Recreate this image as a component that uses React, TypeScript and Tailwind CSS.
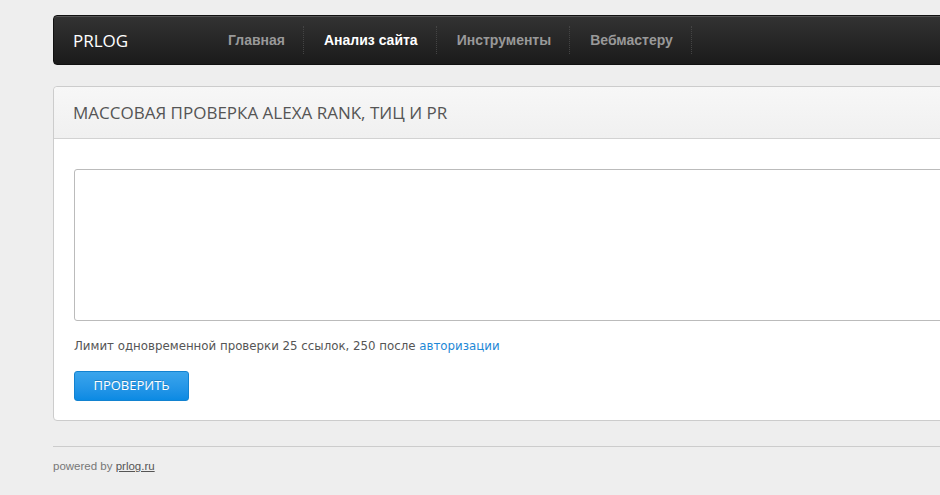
const navItems = [
  { label: "Главная", active: false },
  { label: "Анализ сайта", active: true },
  { label: "Инструменты", active: false },
  { label: "Вебмастеру", active: false },
];

function NavBar() {
  return (
    <div className="flex h-[50px] items-center rounded-[4px] border border-[#111] bg-gradient-to-b from-[#333333] to-[#1b1b1b] pl-[19px] shadow-[inset_0_1px_0_#555]">
      <div className="w-[135px] font-['Open_Sans',sans-serif] text-[17px] leading-none text-white">
        PRLOG
      </div>
      <ul className="flex items-center">
        {navItems.map((item) => (
          <li
            key={item.label}
            className="flex h-[28px] items-center border-r border-dotted border-[#444] pl-[20px] pr-[18px] font-['Liberation_Sans',sans-serif] text-[14px] font-bold"
          >
            <span className={item.active ? "text-white" : "text-[#999999]"}>
              {item.label}
            </span>
          </li>
        ))}
      </ul>
    </div>
  );
}

function CheckPanel() {
  return (
    <div className="mt-[21px] rounded-[4px] border border-[#cccccc] bg-white">
      <div className="flex h-[52px] items-center rounded-t-[4px] border-b border-[#d2d2d2] bg-gradient-to-b from-[#f7f7f7] to-[#f0f0f0] px-[19px]">
        <h1 className="font-['Open_Sans',sans-serif] text-[17px] uppercase text-[#555555]">
          Массовая проверка Alexa Rank, тИЦ и PR
        </h1>
      </div>
      <div className="px-[20px] pb-[19px] pt-[30px]">
        <textarea
          autoFocus
          className="block h-[152px] w-full resize-none rounded-[3px] border border-[#bbbbbb] bg-white px-[5px] py-[4px] font-['DejaVu_Sans',sans-serif] text-[13px] text-[#333] outline-none"
        />
        <p className="mt-[17px] font-['DejaVu_Sans',sans-serif] text-[11.8px] text-[#555555]">
          Лимит одновременной проверки 25 ссылок, 250 после{" "}
          <a className="text-[#1e88d6]" href="#">
            авторизации
          </a>
        </p>
        <button className="mt-[15px] h-[30px] w-[115px] rounded-[3px] border border-[#1282d0] bg-gradient-to-b from-[#3aa5ec] to-[#0a8ae3] font-['Open_Sans',sans-serif] text-[13px] text-white [text-shadow:0_-1px_0_rgba(0,0,0,0.2)]">
          ПРОВЕРИТЬ
        </button>
      </div>
    </div>
  );
}

export default function App() {
  return (
    <div className="h-[495px] w-[940px] overflow-hidden bg-[#eeeeee]">
      <div className="ml-[53px] w-[1170px] pt-[15px]">
        <NavBar />
        <CheckPanel />
        <footer className="mt-[25px] border-t border-[#cccccc] pt-[11px] font-['Liberation_Sans',sans-serif] text-[11.5px] text-[#777777]">
          powered by{" "}
          <a className="text-[#555555] underline" href="#">
            prlog.ru
          </a>
        </footer>
      </div>
    </div>
  );
}
